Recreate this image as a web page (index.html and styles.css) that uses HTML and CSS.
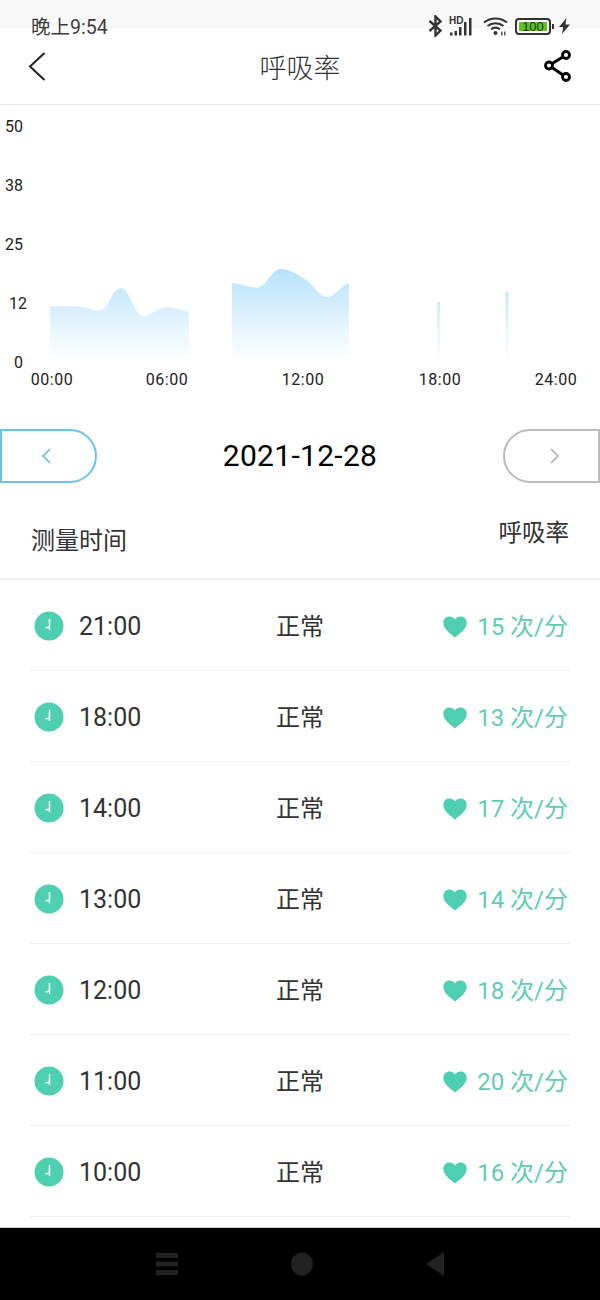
FILE: index.html
```html
<!DOCTYPE html>
<html lang="zh-CN">
<head>
	<meta charset="UTF-8">
	<meta name="viewport" content="width=device-width, initial-scale=1.0">
	<title>呼吸率</title>
	<link rel="stylesheet" href="styles.css">
</head>
<body>
	<svg class="icon-defs">
		<symbol id="clock" viewBox="0 0 30 30">
			<circle cx="15" cy="15" r="14.5" fill="#4ecfb0"/>
			<path d="M15.500 8V19M15.500 16L11.500 17" stroke="#fff" stroke-width="1.500" fill="none"/>
		</symbol>
		<symbol id="heart" viewBox="0 0 24 22">
			<path d="M12 21.500C8.500 18.500 .3 13.500 .3 6.800C.3 3 3 .5 6.500 .5C8.800 .5 10.800 1.600 12 3.400C13.200 1.600 15.200 .5 17.500 .5C21 .5 23.700 3 23.700 6.800C23.700 13.500 15.500 18.500 12 21.500Z" fill="#4ecfb0"/>
		</symbol>
	</svg>

	<div class="status-bar">
		<span class="status-time">晚上9:54</span>
		<div class="status-icons">
			<svg class="ic-bt" width="15" height="22" viewBox="0 0 15 22"><path d="M1.500 6L12.500 15.500L7.500 20.500V1.500L12.500 6.500L1.500 16" fill="none" stroke="#333" stroke-width="2.400"/></svg>
			<div class="signal">
				<span class="signal-hd">HD</span>
				<svg width="23" height="20" viewBox="0 0 23 20"><path d="M1 15.500h2.500v3H1zM5.500 14h2.500v4.500H5.500zM10 10h2.500v8.500H10zM15 5h2.500v13.500H15zM20 1h2.500v17.500H20z" fill="#333"/></svg>
			</div>
			<svg class="ic-wifi" width="26" height="20" viewBox="0 0 26 20"><path d="M1 6.500C7.500 1 17.500 1 24 6.500M4.500 10C9 6.300 16 6.300 20.500 10M8 13.300C10.800 11.200 14.200 11.200 17 13.300" fill="none" stroke="#333" stroke-width="2"/><circle cx="12.500" cy="17" r="2" fill="#333"/><path d="M18 15.500h1.500v4H18zM21 15.500h1.500v4H21z" fill="#555"/></svg>
			<div class="battery"><span class="battery-fill">100</span></div>
			<span class="battery-tip"></span>
			<svg class="ic-bolt" width="11" height="16" viewBox="0 0 11 16"><path d="M7.500 0L0 9h4.200L3 16l8-9.500H6.500z" fill="#333"/></svg>
		</div>
	</div>

	<header class="top-bar">
		<svg class="back-icon" width="18" height="29" viewBox="0 0 18 29"><path d="M16.500 1L2 14.500L16.500 28" fill="none" stroke="#222" stroke-width="2"/></svg>
		<h1 class="page-title">呼吸率</h1>
		<svg class="share-icon" width="30" height="34" viewBox="0 0 30 34"><path d="M23 6L6 16.500L23 28" fill="none" stroke="#000" stroke-width="3"/><circle cx="23" cy="6" r="3.500" fill="#fff" stroke="#000" stroke-width="2.800"/><circle cx="6" cy="16.500" r="3.500" fill="#fff" stroke="#000" stroke-width="2.800"/><circle cx="23" cy="28" r="3.500" fill="#fff" stroke="#000" stroke-width="2.800"/></svg>
	</header>

	<svg class="chart" width="600" height="295" viewBox="0 105 600 295">
		<defs>
			<linearGradient id="areaFill" gradientUnits="userSpaceOnUse" x1="0" y1="269" x2="0" y2="360">
				<stop offset="0" stop-color="#b8e2fb"/>
				<stop offset="1" stop-color="#ffffff"/>
			</linearGradient>
		</defs>
		<path fill="url(#areaFill)" d="M50 306C60 306 70 306 78 306.500C88 307 92 311 100 310.500C109 310 112 288 120.500 288C130 288 134 316 143.500 316C152 316 157 307 166.500 307C175 307 182 310 189 311.500V360H50Z"/>
		<path fill="url(#areaFill)" d="M232 283C240 283 250 288 258 287.500C266 287 272 269 281 269C290 269 298 275 306 280C314 285 319 297 327 297C335 297 342 285 349 283V360H232Z"/>
		<rect x="437" y="302" width="3" height="58" fill="url(#areaFill)"/>
		<rect x="505.500" y="292" width="3" height="68" fill="url(#areaFill)"/>
		<g class="axis-y">
			<text x="5" y="131.500">50</text>
			<text x="5" y="190.500">38</text>
			<text x="5" y="249.500">25</text>
			<text x="9" y="308.500">12</text>
			<text x="14" y="367.500">0</text>
		</g>
		<g class="axis-x">
			<text x="52" y="385">00:00</text>
			<text x="167" y="385">06:00</text>
			<text x="303" y="385">12:00</text>
			<text x="440" y="385">18:00</text>
			<text x="556" y="385">24:00</text>
		</g>
	</svg>

	<div class="date-nav">
		<button class="day-btn day-prev">
			<svg width="12" height="18" viewBox="0 0 12 18"><path d="M10 2L3 9L10 16" fill="none" stroke="#7cc4e8" stroke-width="1.800"/></svg>
		</button>
		<span class="date-text">2021-12-28</span>
		<button class="day-btn day-next">
			<svg width="12" height="18" viewBox="0 0 12 18"><path d="M2 2L9 9L2 16" fill="none" stroke="#bbb" stroke-width="1.800"/></svg>
		</button>
	</div>

	<div class="table-head">
		<span class="head-time">测量时间</span>
		<span class="head-rate">呼吸率</span>
	</div>

	<ul class="record-list">
		<li class="record">
			<span class="record-time"><svg class="clock"><use href="#clock"/></svg>21:00</span>
			<span class="record-state">正常</span>
			<span class="record-rate"><svg class="heart"><use href="#heart"/></svg>15 次/分</span>
		</li>
		<li class="record">
			<span class="record-time"><svg class="clock"><use href="#clock"/></svg>18:00</span>
			<span class="record-state">正常</span>
			<span class="record-rate"><svg class="heart"><use href="#heart"/></svg>13 次/分</span>
		</li>
		<li class="record">
			<span class="record-time"><svg class="clock"><use href="#clock"/></svg>14:00</span>
			<span class="record-state">正常</span>
			<span class="record-rate"><svg class="heart"><use href="#heart"/></svg>17 次/分</span>
		</li>
		<li class="record">
			<span class="record-time"><svg class="clock"><use href="#clock"/></svg>13:00</span>
			<span class="record-state">正常</span>
			<span class="record-rate"><svg class="heart"><use href="#heart"/></svg>14 次/分</span>
		</li>
		<li class="record">
			<span class="record-time"><svg class="clock"><use href="#clock"/></svg>12:00</span>
			<span class="record-state">正常</span>
			<span class="record-rate"><svg class="heart"><use href="#heart"/></svg>18 次/分</span>
		</li>
		<li class="record">
			<span class="record-time"><svg class="clock"><use href="#clock"/></svg>11:00</span>
			<span class="record-state">正常</span>
			<span class="record-rate"><svg class="heart"><use href="#heart"/></svg>20 次/分</span>
		</li>
		<li class="record">
			<span class="record-time"><svg class="clock"><use href="#clock"/></svg>10:00</span>
			<span class="record-state">正常</span>
			<span class="record-rate"><svg class="heart"><use href="#heart"/></svg>16 次/分</span>
		</li>
	</ul>

	<nav class="nav-bar">
		<svg width="22" height="24" viewBox="0 0 22 24"><path d="M0 1h22v5H0zM0 9.500h22v5H0zM0 18h22v5H0z" fill="#222"/></svg>
		<svg width="22" height="24" viewBox="0 0 22 24"><ellipse cx="11" cy="12" rx="11" ry="11.500" fill="#222"/></svg>
		<svg width="18" height="24" viewBox="0 0 18 24"><path d="M18 0V24L0 12Z" fill="#222"/></svg>
	</nav>
</body>
</html>
```

FILE: styles.css
```css
* {
	box-sizing: border-box;
}
html, body {
	margin: 0;
	padding: 0;
}
body {
	width: 600px;
	height: 1300px;
	display: flex;
	flex-direction: column;
	overflow: hidden;
	background-color: #ffffff;
	color: #333333;
	font-family: Roboto, "Noto Sans CJK SC", sans-serif;
}
.icon-defs {
	width: 0;
	height: 0;
	display: block;
}

/* status bar */
.status-bar {
	height: 40px;
	flex: none;
	display: flex;
	justify-content: space-between;
	align-items: center;
	padding: 12px 30px 0 31px;
	background: linear-gradient(#f8f8f8 28px, #ffffff 28px);
}
.status-time {
	font-size: 19.500px;
	padding-bottom: 2px;
	color: #3d3d3d;
}
.status-icons {
	display: flex;
	align-items: center;
}
.signal {
	display: flex;
	flex-direction: column;
	position: relative;
	width: 23px;
	height: 22px;
	margin-left: 6px;
}
.signal-hd {
	position: absolute;
	left: 0;
	top: 0;
	font-size: 10px;
	font-weight: bold;
	font-family: "Liberation Sans", sans-serif;
	color: #333333;
}
.signal svg {
	margin-top: 2px;
}
.ic-wifi {
	margin-left: 11px;
}
.battery {
	width: 36px;
	height: 17px;
	margin-left: 6px;
	padding: 2px;
	border: 2px solid #333333;
	border-radius: 4px;
	display: flex;
}
.battery-fill {
	flex: 1;
	background-color: #63c120;
	color: #1d3a08;
	font-size: 13px;
	line-height: 9px;
	text-align: center;
	font-family: "Liberation Sans", sans-serif;
}
.battery-tip {
	width: 2px;
	height: 5px;
	margin-left: 1px;
	background-color: #333333;
}
.ic-bolt {
	margin-left: 5px;
}

/* header */
.top-bar {
	height: 65px;
	flex: none;
	display: grid;
	grid-template-columns: 1fr auto 1fr;
	align-items: center;
	padding: 0 27px 12px 27px;
	border-bottom: 1px solid #e8e8e8;
}
.back-icon {
	margin-left: 1px;
}
.share-icon {
	justify-self: end;
}
.page-title {
	margin: 0;
	font-size: 27px;
	font-weight: 300;
	color: #333333;
}

/* chart */
.chart {
	display: block;
	flex: none;
}
.axis-y text {
	font-size: 16px;
	fill: #222222;
}
.axis-x text {
	font-size: 16px;
	letter-spacing: 0.5px;
	fill: #222222;
	text-anchor: middle;
}

/* date switcher */
.date-nav {
	flex: none;
	display: flex;
	justify-content: space-between;
	align-items: center;
	padding-top: 29px;
}
.day-btn {
	width: 97px;
	height: 54px;
	padding: 0;
	display: flex;
	justify-content: center;
	align-items: center;
	background-color: transparent;
}
.day-prev {
	border: 2px solid #6cc2ef;
	border-radius: 0 27px 27px 0;
	padding-right: 6px;
}
.day-next {
	border: 2px solid #bbbbbb;
	border-radius: 27px 0 0 27px;
	padding-left: 6px;
}
.date-text {
	font-size: 30px;
	letter-spacing: 0.3px;
	padding-bottom: 2px;
	color: #000000;
}

/* list */
.table-head {
	height: 97px;
	flex: none;
	display: flex;
	justify-content: space-between;
	padding: 0 31px;
	border-bottom: 2px solid #f2f2f2;
}
.head-time {
	font-size: 24px;
	line-height: 34px;
	margin-top: 41px;
}
.head-rate {
	font-size: 23.500px;
	line-height: 34px;
	margin-top: 33px;
}
.record-list {
	flex: 1;
	margin: 0;
	padding: 0 30px;
	list-style: none;
}
.record {
	height: 91px;
	display: grid;
	grid-template-columns: 1fr auto 1fr;
	align-items: center;
	border-bottom: 1px solid #efefef;
}
.record-time {
	display: flex;
	align-items: center;
	font-size: 25px;
	padding: 2px 0 0 4px;
}
.clock {
	width: 30px;
	height: 30px;
	margin-right: 15px;
}
.record-state {
	font-size: 24px;
	padding-bottom: 2px;
}
.record-rate {
	display: flex;
	justify-content: flex-end;
	align-items: center;
	font-size: 24px;
	color: #5fcdb3;
	padding: 0 2px 2px 0;
}
.heart {
	width: 24px;
	height: 22px;
	margin-top: 6px;
	margin-right: 10px;
}

/* nav bar */
.nav-bar {
	height: 73px;
	flex: none;
	display: flex;
	justify-content: center;
	align-items: center;
	gap: 113px;
	background-color: #000000;
	border-top: 1px solid #cccccc;
}
```
